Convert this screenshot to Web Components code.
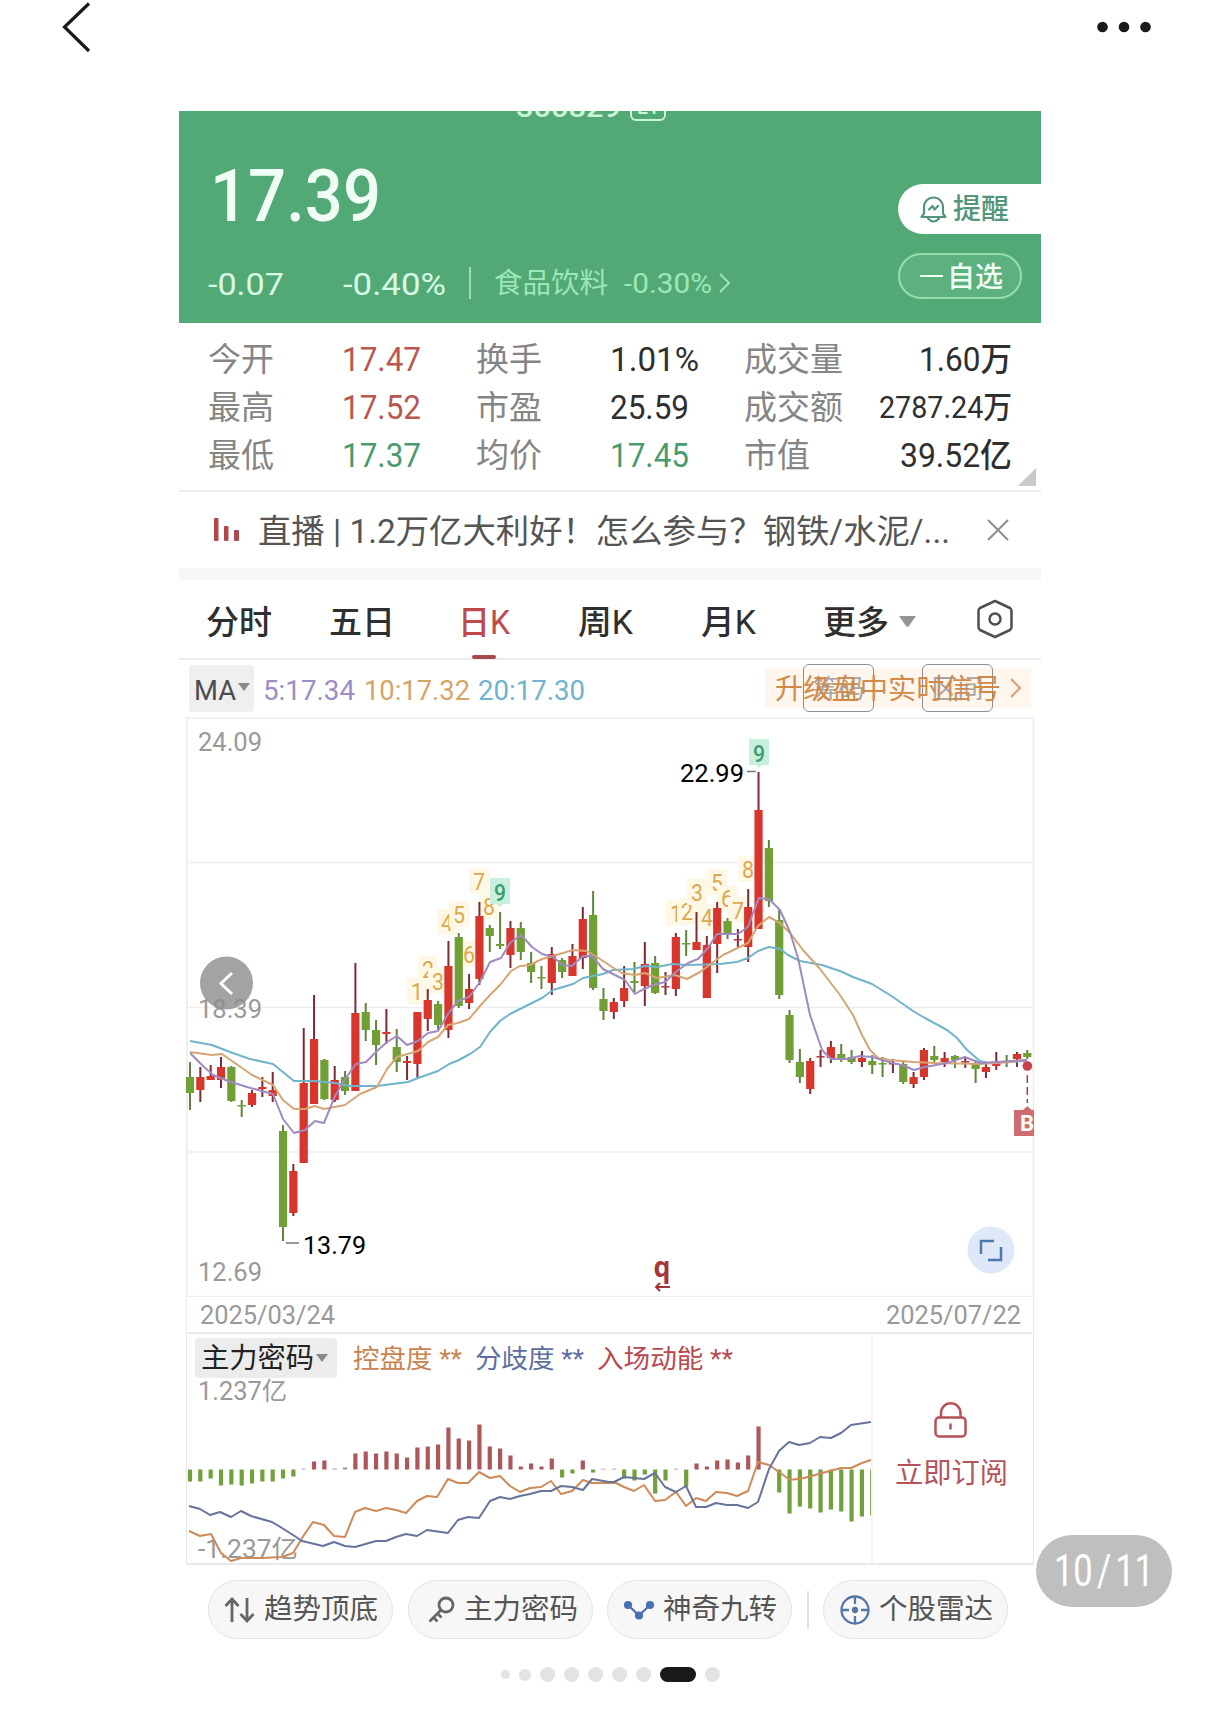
<!DOCTYPE html>
<html lang="zh-CN">
<head>
<meta charset="utf-8">
<title>行情</title>
<style>
html,body{margin:0;padding:0;background:#fff}
body{width:1220px;height:1734px;overflow:hidden;font-family:Roboto,"Noto Sans CJK SC",sans-serif}
</style>
</head>
<body>
<stock-page></stock-page>
<script>
const define = (name, html, setup) => customElements.define(name, class extends HTMLElement {
  connectedCallback() {
    if (this.shadowRoot) return;
    const root = this.attachShadow({ mode: 'open' });
    root.innerHTML = typeof html === 'function' ? html(this) : html;
    if (setup) setup(this, root);
  }
});

/* Text squeezed or stretched horizontally to a given width. */
define('fit-text',
  `<style>:host{display:block;flex:none;white-space:nowrap}span{display:inline-block;transform-origin:0 50%;vertical-align:top}</style><span><slot></slot></span>`,
  (el, root) => {
    const w = +el.getAttribute('w');
    const span = root.querySelector('span');
    const natural = span.getBoundingClientRect().width;
    el.style.width = w + 'px';
    if (natural) span.style.transform = `scaleX(${w / natural})`;
  });

define('top-nav', `<style>
:host{display:flex;justify-content:space-between;align-items:flex-start;height:111px;padding:0 68px 0 60px;box-sizing:border-box}
svg{display:block}</style>
<svg width="34" height="54" viewBox="60 0 34 54" fill="none" stroke="#1a1a1a" stroke-width="3.2"><path d="M89 3.500L64.500 27L89 51"/></svg>
<svg width="60" height="54" viewBox="1092 0 60 54" fill="#1a1a1a"><circle cx="1102.500" cy="27" r="5.300"/><circle cx="1124" cy="27" r="5.300"/><circle cx="1145.500" cy="27" r="5.300"/></svg>`);

define('quote-header', `<style>
:host{display:flex;height:212px;background:#53a976;color:#f0fff5;overflow:hidden}
.left{flex:1;display:flex;flex-direction:column}
.code{display:flex;gap:9px;margin-top:-20px;padding-left:337px;height:34px;font-size:28px;line-height:34px;font-weight:500;color:#c9f5d8}
.lv{box-sizing:border-box;width:36px;height:30px;border:2px solid #c9f5d8;border-radius:6px;font-size:20px;line-height:28px;display:flex;justify-content:center}
.price{margin:31px 0 0 31px;font-size:73px;line-height:80px;font-weight:500}
.chg{display:flex;align-items:center;margin-top:28px;padding-left:29px;height:40px;line-height:40px;font-size:32px;font-weight:450;color:#d7fbe4}
.chg fit-text:nth-child(2){margin-left:59px}
.bar{width:2px;height:32px;background:#9be0b4;margin:-3px 23px 0 23px}
.sec{font-size:28.500px;font-weight:400;color:#9be7b6}
.sec+.sec{margin-left:16px}
.chg svg{margin-left:7px}
.right{width:143px;padding-top:73px;display:flex;flex-direction:column;gap:19px;font-size:28px}
.remind{height:50px;background:#fff;border-radius:25px 0 0 25px;color:#52957a;display:flex;align-items:center;padding-left:22px;gap:6px;box-sizing:border-box;line-height:54px;font-weight:450}
.fav{width:124px;height:46px;box-sizing:border-box;border:2px solid #93e0ae;border-radius:23px;background:#5db17f;color:#f0fff5;display:flex;align-items:center;padding-left:20px;gap:4px;line-height:46px;font-weight:450}
.fav fit-text{margin-top:4px}.remind fit-text{margin-top:1px}
.minus{width:23px;height:2.500px;background:#f0fff5}
</style>
<div class="left">
<div class="code"><fit-text w="105">300829</fit-text><div class="lv">L1</div></div>
<div class="price"><fit-text w="171">17.39</fit-text></div>
<div class="chg"><fit-text w="76">-0.07</fit-text><fit-text w="103">-0.40%</fit-text><div class="bar"></div><fit-text class="sec" w="114">食品饮料</fit-text><fit-text class="sec" w="88">-0.30%</fit-text>
<svg width="12" height="22" fill="none" stroke="#9be7b6" stroke-width="2"><path d="M1 1L10 10L1 19"/></svg></div>
</div>
<div class="right">
<div class="remind"><svg width="27" height="28" viewBox="0 0 27 28" fill="none" stroke="#52957a" stroke-width="2.200" stroke-linejoin="round" stroke-linecap="round"><path d="M1.500 22H25.500L23 18.500V12A9.500 9.500 0 0 0 4 12V18.500Z"/><path d="M8 23.500Q13.500 29.500 19 23.500"/><path d="M9 14.500L12.500 11L14.500 14.500L18 11"/></svg><fit-text w="56">提醒</fit-text></div>
<div class="fav"><div class="minus"></div><fit-text w="56">自选</fit-text></div>
</div>`);

define('quote-stats', `<style>
:host{display:grid;grid-template-columns:134px 134px 134px 134px 116px 1fr;grid-auto-rows:47.700px;align-items:center;height:169px;box-sizing:border-box;padding:13px 29px 0 29px;font-size:33px;line-height:47px;border-bottom:2px solid #ededed;color:#2f2f2f;position:relative}
.l{color:#858585}
.v{font-weight:450}
.up{color:#b95750}.dn{color:#4a9a70}
.end{justify-self:end}
.corner{position:absolute;right:5px;bottom:4px;width:0;height:0;border-left:18px solid transparent;border-bottom:18px solid #c9c9c9}
</style>
<fit-text class="l" w="66">今开</fit-text><fit-text class="v up" w="79">17.47</fit-text><fit-text class="l" w="66">换手</fit-text><fit-text class="v" w="89">1.01%</fit-text><fit-text class="l" w="99">成交量</fit-text><fit-text class="v end" w="93">1.60万</fit-text>
<fit-text class="l" w="66">最高</fit-text><fit-text class="v up" w="79">17.52</fit-text><fit-text class="l" w="66">市盈</fit-text><fit-text class="v" w="79">25.59</fit-text><fit-text class="l" w="99">成交额</fit-text><fit-text class="v end" w="133" style="font-size:31px">2787.24万</fit-text>
<fit-text class="l" w="66">最低</fit-text><fit-text class="v dn" w="79">17.37</fit-text><fit-text class="l" w="66">均价</fit-text><fit-text class="v dn" w="79">17.45</fit-text><fit-text class="l" w="66">市值</fit-text><fit-text class="v end" w="112">39.52亿</fit-text>
<i class="corner"></i>`);

define('news-bar', `<style>
:host{display:flex;align-items:center;height:88px;box-sizing:border-box;padding:0 32px 0 35px;border-bottom:12px solid #f7f7f7;font-size:33px;line-height:60px;color:#555}
fit-text{margin:4px 0 0 18px}
.x{margin-left:auto}
</style>
<svg width="26" height="24" fill="#b0494c"><rect x="0" y="0" width="4.500" height="23" rx="1"/><rect x="10" y="8" width="4.500" height="15" rx="1"/><rect x="20" y="12" width="5" height="11" rx="1"/></svg>
<fit-text w="692">直播 | 1.2万亿大利好！怎么参与？钢铁/水泥/...</fit-text>
<svg class="x" width="22" height="22" stroke="#8c8c8c" stroke-width="2" fill="none"><path d="M1 1L21 21M21 1L1 21"/></svg>`);

define('period-tabs', `<style>
:host{display:grid;grid-template-columns:123px 129px 120px 123px 122px 153px 40px;align-items:center;height:80px;box-sizing:border-box;padding-left:27px;border-bottom:2px solid #ececec;font-size:33px;line-height:78px;color:#2f2f2f;font-weight:450}
fit-text{padding-top:4px;height:74px;line-height:78px}
.on{color:#c0474a;position:relative}
.on::after{content:"";position:absolute;left:14px;bottom:-1px;width:24px;height:4px;border-radius:2px;background:#a9484c}
.more{display:flex;align-items:center;gap:10px}
svg{display:block}.more svg{margin-top:4px}
</style>
<fit-text w="66">分时</fit-text><fit-text w="66">五日</fit-text><fit-text class="on" w="52">日K</fit-text><fit-text w="55">周K</fit-text><fit-text w="55">月K</fit-text>
<div class="more"><fit-text w="66">更多</fit-text><svg width="17" height="11" fill="#959595"><path d="M0 0H17L10 10Q8.500 11.500 7 10Z"/></svg></div>
<svg width="38" height="40" viewBox="0 0 38 40" fill="none" stroke="#4f4f4f" stroke-width="2.500" stroke-linejoin="round"><path d="M19 2L34 9Q35.500 10 35.500 12V28Q35.500 30 34 31L19 38L4 31Q2.500 30 2.500 28V12Q2.500 10 4 9Z"/><circle cx="19" cy="20" r="5.500"/></svg>`);

define('ma-bar', `<style>
:host{display:flex;align-items:center;height:57px;box-sizing:border-box;padding:0 0 0 10px;font-size:28px;line-height:46px;position:relative}
.ma{display:flex;align-items:center;gap:2px;width:65px;height:47px;border-radius:4px;background:#efefef;color:#4c4c4c;padding-left:5px;box-sizing:border-box}
.ma svg{margin-top:-3px}
fit-text{margin-top:4px}
.a{color:#9b8dc6;margin-left:9px}.b{color:#d5a568;margin-left:9px}.c{color:#71b3cd;margin-left:8px}
.chip{position:absolute;top:4px;width:71px;height:48px;box-sizing:border-box;border:1.500px solid #8e8e8e;border-radius:6px;font-size:26px;line-height:48px;color:#a5a5a5;display:flex;justify-content:center}
.promo{position:absolute;left:586px;top:8px;width:266px;height:40px;background:#fff6ed;color:#d28a48;display:flex;align-items:center;gap:9px;padding-left:10px;box-sizing:border-box;font-size:28px;line-height:40px}
.promo fit-text{position:relative;z-index:1}
</style>
<div class="ma"><fit-text w="42">MA</fit-text><svg width="12" height="8" fill="#8a8a8a"><path d="M0 0H12L6 8Z"/></svg></div>
<fit-text class="a" w="92">5:17.34</fit-text><fit-text class="b" w="106">10:17.32</fit-text><fit-text class="c" w="107">20:17.30</fit-text>
<div class="promo"><fit-text w="226">升级盘中实时信号</fit-text><svg width="12" height="20" fill="none" stroke="#d9a26b" stroke-width="2"><path d="M1 1L10 10L1 19"/></svg></div>
<div class="chip" style="left:624px">筹码</div><div class="chip" style="left:743px">区间</div>`);

const RED = '#d8362c', RED_WICK = '#7d2b33', GREEN = '#6f9f35', GREEN_WICK = '#5d8438';
const candleX = i => 190 + i * 10.337;
/* direction, high, body top, body bottom, low (canvas y) */
const CANDLES = `G 1062 1077 1093 1110|R 1067 1077 1090 1102|R 1065 1076 1080 1080|R 1057 1067 1080 1088|G 1066 1067 1101 1102|G 1100 1105 1106 1117|R 1090 1093 1105 1107|R 1077 1087 1089 1097|R 1072 1090 1096 1102|G 1125 1131 1227 1241|R 1164 1171 1213 1216|R 1028 1083 1163 1163|R 995 1039 1104 1104|G 1059 1060 1099 1100|R 1066 1080 1100 1102|G 1071 1077 1091 1095|R 963 1013 1091 1091|G 1003 1012 1030 1041|G 1020 1030 1045 1065|R 1009 1032 1034 1044|G 1029 1047 1062 1072|R 1056 1061 1063 1080|R 1012 1012 1064 1079|R 989 1000 1019 1031|G 1001 1004 1025 1030|R 941 966 1030 1038|G 933 937 1006 1008|R 974 989 1003 1009|R 902 916 979 985|G 925 928 936 952|G 912 944 946 949|R 921 928 955 968|G 922 928 952 960|G 952 963 972 983|G 966 977 978 989|R 947 954 983 995|G 958 960 972 978|R 944 956 976 976|R 907 919 958 969|G 891 915 988 990|G 988 999 1011 1020|R 998 1002 1012 1019|R 966 988 1001 1007|G 962 981 983 992|R 942 964 986 1006|G 956 963 993 994|R 972 986 987 995|R 933 937 989 996|G 930 943 944 956|R 912 942 950 950|R 936 945 998 998|R 902 908 944 973|G 918 921 935 939|R 929 939 940 947|R 889 907 947 962|R 772 810 929 929|G 840 848 901 907|G 910 920 995 999|G 1010 1015 1060 1063|G 1049 1062 1077 1083|R 1058 1061 1089 1094|R 1050 1056 1057 1067|R 1041 1047 1058 1063|G 1044 1054 1058 1062|G 1050 1057 1062 1064|R 1051 1058 1062 1067|G 1055 1061 1065 1074|G 1057 1063 1064 1077|R 1059 1063 1064 1073|G 1062 1064 1082 1084|R 1072 1077 1084 1088|R 1048 1050 1077 1080|G 1046 1056 1060 1063|R 1052 1058 1062 1067|G 1055 1056 1060 1068|R 1057 1061 1062 1068|G 1060 1063 1069 1083|R 1063 1067 1072 1078|R 1052 1063 1066 1070|G 1055 1061 1062 1067|R 1052 1054 1059 1067|G 1050 1053 1057 1059`.split('|').map(s => s.split(' '));
const MA20 = '190,1041 212,1045 230,1052 250,1059 273,1064 294,1081 315,1081 335,1083 350,1086 377,1086 408,1082 418,1078 438,1071 449,1064 459,1060 470,1054 480,1047 490,1032 500,1021 510,1014 520,1009 532,1003 542,998 553,990 573,984 583,978 603,974 613,970 633,969 645,966 657,967 672,964 687,965 720,964 737,962 748,958 758,951 769,947 780,949 788,955 800,961 822,965 840,971 853,977 872,984 893,997 913,1011 925,1018 947,1030 957,1038 967,1050 980,1061 988,1063 1027,1061';
const MA10 = '190,1052 212,1055 222,1054 242,1068 252,1075 273,1085 283,1100 294,1109 305,1109 315,1106 324,1109 345,1105 360,1094 377,1087 387,1069 397,1057 418,1051 428,1042 438,1037 448,1025 458,1023 469,1019 480,1006 490,995 500,985 511,971 520,966 530,965 542,959 553,956 563,953 573,950 587,951 597,957 612,967 622,973 635,975 645,973 657,978 675,975 687,979 700,972 712,963 723,955 748,943 758,926 769,917 780,923 790,933 803,950 820,969 840,995 853,1015 862,1035 870,1050 878,1058 890,1060 913,1062 935,1063 980,1064 1010,1062 1027,1060';
const MA5 = '190,1053 202,1065 213,1075 228,1081 247,1087 273,1094 283,1119 294,1133 305,1130 315,1121 324,1123 335,1096 345,1079 356,1064 366,1062 377,1051 387,1042 397,1036 407,1045 418,1041 428,1033 438,1031 448,1014 458,1001 469,997 480,982 490,962 501,958 510,943 521,935 532,947 542,954 553,957 563,965 572,966 583,956 592,956 603,969 613,974 625,980 635,994 640,991 653,985 665,982 677,971 688,963 698,959 708,948 717,934 738,934 748,927 753,913 759,898 769,899 780,910 790,932 798,958 810,1015 822,1050 831,1059 847,1059 860,1056 873,1057 882,1060 893,1063 902,1065 914,1070 925,1067 947,1063 965,1057 980,1063 997,1062 1027,1060';
const line = (pts, c, w = 2) => `<polyline points="${pts}" fill="none" stroke="${c}" stroke-width="${w}" stroke-linejoin="round"/>`;
const label = (x, y, w, s, c, size = 25, wt = 400) => `<text x="${x}" y="${y}" textLength="${w}" lengthAdjust="spacingAndGlyphs" fill="${c}" font-size="${size}" font-weight="${wt}">${s}</text>`;

/* sequence count markers: digit, centre x, centre y */
const COUNTS = [[1,417,991],[2,428,969],[3,438,981],[4,447,922],[5,459,914],[6,469,954],[7,479,881],[8,489,906],[9,500,892],[1,676,913],[2,687,911],[3,697,892],[4,707,917],[5,717,882],[6,727,898],[7,738,910],[8,748,869],[9,759,753]];

define('kline-chart', () => {
  const counts = COUNTS.map(([n, x, y]) => n === 9
    ? `<path d="M${x-10} ${y-14}h20v26h-7l-3 3l-3 -3h-7z" fill="#c9f0dd"/>` + label(x - 6, y + 8.5, 12, n, '#3a9c72', 24, 500)
    : `<rect x="${x-10}" y="${y-13}" width="20" height="26" fill="#fff8e6"/>` + label(x - 6, y + 8.5, 12, n, '#dca84e', 24, 450)).join('');
  const candles = CANDLES.map(([d, h, t, b, l], i) => {
    const x = candleX(i), up = d === 'R', thin = b - t < 2;
    return `<path d="M${x} ${h}V${l}" stroke="${up ? RED_WICK : GREEN_WICK}" stroke-width="2"/><rect x="${x - 4.1}" y="${t}" width="8.200" height="${Math.max(1.5, b - t)}" fill="${up ? (thin ? '#b03a48' : RED) : GREEN}"/>`;
  }).join('');
  return `<style>:host{display:block;margin-left:7px}svg{display:block}</style>
<svg width="849" height="580" viewBox="186 717 849 580">
<g fill="none" stroke="#ededed" stroke-width="1.700"><path d="M187 1297V718H1033.500V1297M187 862.500H1033M187 1007.500H1033M187 1152H1033M187 1296.500H1033"/></g>
${label(198,751,64,'24.09','#999')}${label(198,1018,64,'18.39','#999')}${label(198,1281,64,'12.69','#999')}
${counts}${candles}${line(MA20,'#70b4cb')}${line(MA10,'#d7a573')}${line(MA5,'#a08ac0')}
<path d="M286 1243H299M747 771.500H756" stroke="#777" stroke-width="1.500"/>
${label(303,1253.5,63,'13.79','#000',26.5,450)}${label(680,782,64,'22.99','#000',26.5,450)}
<circle cx="226.500" cy="983" r="26.500" fill="#8c8c8c" fill-opacity=".8"/><path d="M232 973L221 983.500L232 994" fill="none" stroke="#fff" stroke-width="3"/>
<circle cx="1027.300" cy="1066" r="4.800" fill="#c9424a"/><path d="M1027.300 1075V1103" stroke="#8d4a50" stroke-width="1.500" stroke-dasharray="8 4"/>
<path d="M1014 1110H1023L1027.300 1106L1031.500 1110H1034V1136H1014Z" fill="#cf6c70"/><svg x="1014" y="1106" width="20" height="32"><text x="6" y="25" fill="#fff" font-size="22" font-weight="700">B</text></svg>
<circle cx="991" cy="1250" r="23.500" fill="#dfe8f8"/><path d="M981 1254V1241H994M1001 1247V1260H988" fill="none" stroke="#4b78ae" stroke-width="2.500"/>
<text x="653.500" y="1277" style="font-family:'Open Sans'" font-size="29" font-weight="700" fill="#a5333a" textLength="17" lengthAdjust="spacingAndGlyphs">q</text><path d="M670 1287H656M660 1283L656 1287L660 1291" fill="none" stroke="#a5333a" stroke-width="2"/>
</svg>`;
});

define('date-row', `<style>
:host{display:flex;justify-content:space-between;align-items:center;height:37px;box-sizing:border-box;margin-left:7px;width:848px;padding:2px 12px 0 13px;border:solid #ebebeb;border-width:0 1.500px 2px;font-size:25.500px;line-height:37px;color:#999}
</style><fit-text w="135">2025/03/24</fit-text><fit-text w="135">2025/07/22</fit-text>`);

const BARS = [-12,-12,-9,-16,-15,-16,-14,-12,-12,-9,-7,.8,8,9,1,2,16,18,16,18,16,12,22,23,25,42,31,29,45,23,21,14,3,6,3,11,-8,-4,9,-3,.8,.8,-9,-11,-5,-24,-11,.8,-17,6,3,9,10,7,14,43,0,-23,-44,-37,-39,-43,-40,-42,-52,-47,-46];
const CTRL = '190,1531 201,1536 212,1534 222,1553 232,1561 242,1558 263,1558 283,1557 294,1553 305,1535 314,1522 325,1525 335,1536 346,1537 356,1512 366,1508 377,1511 387,1508 397,1510 407,1513 418,1501 428,1496 438,1497 449,1479 459,1483 469,1483 480,1472 491,1478 501,1476 511,1486 521,1492 531,1488 542,1487 552,1481 562,1494 573,1491 584,1480 593,1483 605,1483 617,1483 625,1487 635,1491 645,1485 656,1501 666,1500 677,1492 687,1506 697,1498 707,1501 717,1492 728,1493 738,1496 749,1491 759,1462 770,1465 780,1472 791,1480 805,1478 842,1468 852,1468 863,1463 872,1460';
const DIVG = '190,1506 201,1509 211,1515 221,1512 232,1517 242,1511 252,1516 273,1522 283,1528 294,1535 303,1541 324,1546 335,1542 346,1546 356,1547 377,1541 387,1541 397,1537 407,1534 418,1536 428,1530 449,1533 459,1520 469,1517 480,1518 491,1501 501,1497 511,1499 521,1496 531,1494 542,1491 552,1491 562,1486 573,1487 584,1490 593,1479 610,1482 615,1482 625,1477 645,1479 656,1473 666,1487 677,1492 687,1486 697,1507 707,1507 717,1503 728,1505 738,1505 749,1508 759,1502 770,1469 780,1451 790,1442 800,1445 811,1443 821,1437 832,1438 842,1433 852,1425 872,1422';

define('power-chart', () => {
  const bars = BARS.map((v, i) => `<rect x="${candleX(i) - 1.1}" y="${v > 0 ? 1469.5 - v : 1469.5}" width="4.200" height="${Math.abs(v)}" fill="${Math.abs(v) < 3 ? '#999' : v > 0 ? '#ad575b' : '#71a03c'}"/>`).join('');
  return `<style>
:host{display:flex;box-sizing:border-box;width:848px;height:231px;margin-left:7px;border:solid #e9e9e9;border-width:0 1.500px 2.500px}
.plot{width:686px;display:grid;border-right:2px solid #f2f2f2;box-sizing:border-box}
.plot>*{grid-area:1/1}
svg{display:block}
.head{display:flex;align-items:center;height:40px;margin-top:4px;padding-left:8px;font-size:26px;line-height:40px}
.head>fit-text{margin-top:2px}
.pick{display:flex;align-items:center;gap:2px;width:142px;height:40px;box-sizing:border-box;padding-left:6px;border-radius:4px;background:#ececec;color:#222;font-size:28px}
.pick fit-text{margin-top:2px}
.o{color:#c98350}.p{color:#5d6ea0}.r{color:#b8474f}
.lock{flex:1;display:flex;flex-direction:column;align-items:center;padding:68px 4px 0 0;gap:13px;font-size:28px;line-height:44px;color:#b5525a}
</style>
<div class="plot">
<svg width="684" height="228" viewBox="188 1334 684 228">
${label(199,1399.5,89,'1.237亿','#999')}${label(199,1558,100,'-1.237亿','#999')}
${bars}${line(CTRL,'#ce8a57')}${line(DIVG,'#66739a')}
</svg>
<div class="head"><div class="pick"><fit-text w="113">主力密码</fit-text><svg width="12" height="8" fill="#8a8a8a"><path d="M0 0H12L6 8Z"/></svg></div>
<fit-text class="o" w="109" style="margin-left:16px">控盘度 **</fit-text><fit-text class="p" w="109" style="margin-left:13px">分歧度 **</fit-text><fit-text class="r" w="136" style="margin-left:13px">入场动能 **</fit-text></div>
</div>
<div class="lock"><svg width="34" height="37" viewBox="0 0 34 37" fill="none" stroke="#b5525a" stroke-width="2.500" stroke-linecap="round"><rect x="1.500" y="15.500" width="30" height="19" rx="3.500"/><path d="M7 15V11A9.700 9.700 0 0 1 26.500 11V15M16.500 22.500V26.500"/></svg><fit-text w="113">立即订阅</fit-text></div>`;
});

define('tool-pill', el => `<style>
:host{display:flex;align-items:center;box-sizing:border-box;width:185px;height:59px;border:1.500px solid #e3e3e3;border-radius:30px;background:#f7f7f7;padding-left:${el.getAttribute('pad') || 15}px;font-size:28.500px;line-height:58px;color:#555}
fit-text{margin-left:auto;margin-right:14px}
::slotted(svg){display:block;flex:none}
</style><slot name="icon"></slot><fit-text w="114">${el.getAttribute('label')}</fit-text>`);

define('tool-bar', `<style>
:host{display:flex;align-items:center;gap:14.500px;padding:15px 0 0 29px;height:59px}
i{width:2px;height:38px;background:#e2e2e2}
</style>
<tool-pill label="趋势顶底"><svg slot="icon" width="32" height="28" fill="none" stroke="#666" stroke-width="2.800"><path d="M8 26V3M1.500 10L8 3L14.500 10M23 2V25M16.500 18L23 25L29.500 18"/></svg></tool-pill>
<tool-pill label="主力密码" pad="19"><svg slot="icon" width="28" height="28" fill="none" stroke="#666" stroke-width="2.800"><circle cx="18" cy="9" r="7"/><path d="M13 14L1.500 25.500M9.500 17.500L13.500 21.500M5.500 21.500L9.500 25.500"/></svg></tool-pill>
<tool-pill label="神奇九转"><svg slot="icon" width="32" height="20" fill="#4a6fb5" stroke="#4a6fb5" stroke-width="2.200"><path d="M5 5L16 15.500L27 5" fill="none"/><circle cx="5" cy="5" r="3"/><circle cx="27" cy="5" r="3"/><circle cx="16" cy="15.500" r="3"/></svg></tool-pill>
<i></i>
<tool-pill label="个股雷达"><svg slot="icon" width="32" height="32" fill="none" stroke="#5577a8" stroke-width="2.300"><circle cx="16" cy="16" r="13.500"/><path d="M16 2V10M16 22V30M2 16H10M22 16H30"/><circle cx="16" cy="16" r="2" fill="#5577a8"/></svg></tool-pill>`);

define('page-dots', `<style>
:host{display:flex;align-items:center;gap:9px;margin:28px 0 0 501px;height:15px}
i{width:15px;height:15px;border-radius:8px;background:#e3e3e3}
i:nth-of-type(1){width:9px;height:9px}i:nth-of-type(2){width:12px;height:12px}
i.on{width:36px;background:#191919}
</style><i></i><i></i><i></i><i></i><i></i><i></i><i></i><i class="on"></i><i></i>`);

define('page-badge', `<style>
:host{position:absolute;left:1036px;top:1535px;width:136px;height:72px;border-radius:36px;background:#bfbfbf;color:#fff;display:flex;align-items:center;justify-content:center;font-size:45px;line-height:74px;font-weight:450}
</style><fit-text w="100">10<span style="letter-spacing:.12em;margin-left:.12em">/</span>11</fit-text>`);

define('stock-page', `<style>
:host{display:block;position:relative;width:1220px;height:1734px}
main{margin-left:179px;width:862px}
</style>
<top-nav></top-nav>
<main><quote-header></quote-header><quote-stats></quote-stats><news-bar></news-bar><period-tabs></period-tabs><ma-bar></ma-bar><kline-chart></kline-chart><date-row></date-row><power-chart></power-chart><tool-bar></tool-bar></main>
<page-dots></page-dots><page-badge></page-badge>`);
</script>
</body>
</html>
